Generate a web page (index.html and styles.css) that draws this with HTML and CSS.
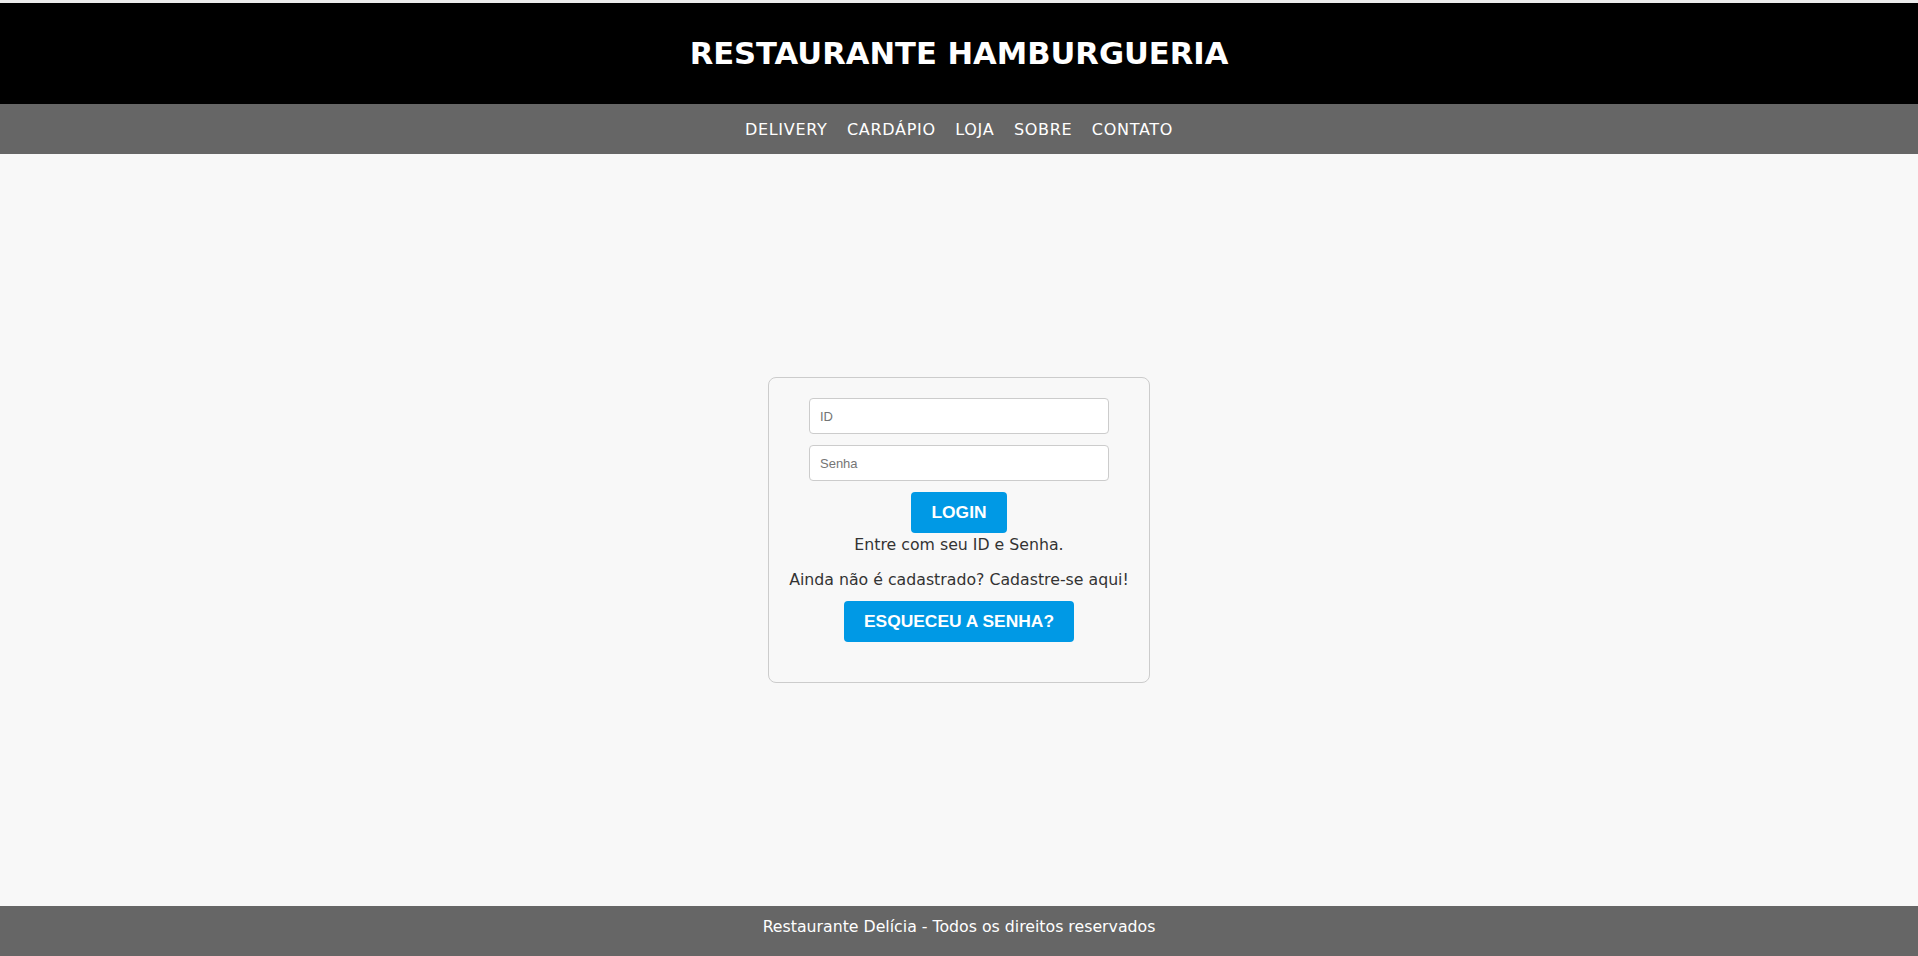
FILE: index.html
```html
<!DOCTYPE html>
<html lang="pt-BR">
<head>
<meta charset="utf-8">
<title>Restaurante Hamburgueria</title>
<link rel="stylesheet" href="styles.css">
</head>
<body>
<div class="page">
  <header class="site-header">
    <h1 class="site-title">RESTAURANTE HAMBURGUERIA</h1>
  </header>
  <nav class="site-nav">
    <a href="#">DELIVERY</a>
    <a href="#">CARDÁPIO</a>
    <a href="#">LOJA</a>
    <a href="#">SOBRE</a>
    <a href="#">CONTATO</a>
  </nav>
  <main class="site-main">
    <form class="login-box">
      <input class="field" type="text" placeholder="ID">
      <input class="field" type="password" placeholder="Senha">
      <button class="btn" type="button">LOGIN</button>
      <div class="hint">Entre com seu ID e Senha.</div>
      <p class="signup">Ainda não é cadastrado? Cadastre-se aqui!</p>
      <button class="btn" type="button">ESQUECEU A SENHA?</button>
    </form>
  </main>
  <footer class="site-footer">Restaurante Delícia - Todos os direitos reservados</footer>
</div>
</body>
</html>
```
FILE: styles.css
```css
html, body { margin: 0; padding: 0; }
body { background: #f8f8f8; font-family: "DejaVu Sans", "Open Sans", sans-serif; color: #333; }
.page { display: flex; flex-direction: column; min-height: 100vh; border-top: 3px solid #ebebeb; box-sizing: border-box; }
.site-header { background: #000; height: 101px; display: flex; align-items: center; justify-content: center; }
.site-title { margin: 0; color: #fff; font: 700 30.6px "DejaVu Sans", sans-serif; }
.site-nav { background: #666; height: 50px; display: flex; justify-content: center; align-items: center; gap: 19.5px; }
.site-nav a { color: #fff; text-decoration: none; font: 16px "DejaVu Sans", sans-serif; letter-spacing: 0.7px; }
.site-main { flex: 1; display: flex; align-items: center; justify-content: center; }
.login-box { border: 1px solid #ccc; border-radius: 8px; padding: 20px 20px 40px; display: flex; flex-direction: column; align-items: center; text-align: center; }
.field { width: 300px; height: 36px; box-sizing: border-box; border: 1px solid #ccc; border-radius: 4px; padding: 0 10px; background: #fff; font: 13px "Liberation Sans", Arial, sans-serif; margin: 0 0 11px; }
.field::placeholder { color: #757575; }
.btn { background: #0099e5; color: #fff; border: 0; border-radius: 4px; padding: 10px 20px; font: 700 17.4px/21px "Liberation Sans", Arial, sans-serif; cursor: pointer; }
.hint { font-size: 15.75px; line-height: 19.5px; margin-top: 2px; }
.signup { font-size: 15.75px; line-height: 19.5px; margin: 15px 0 12px; }
.site-footer { background: #666; color: #fff; height: 50px; box-sizing: border-box; padding-bottom: 9px; display: flex; align-items: center; justify-content: center; font-size: 15.75px; }
```
